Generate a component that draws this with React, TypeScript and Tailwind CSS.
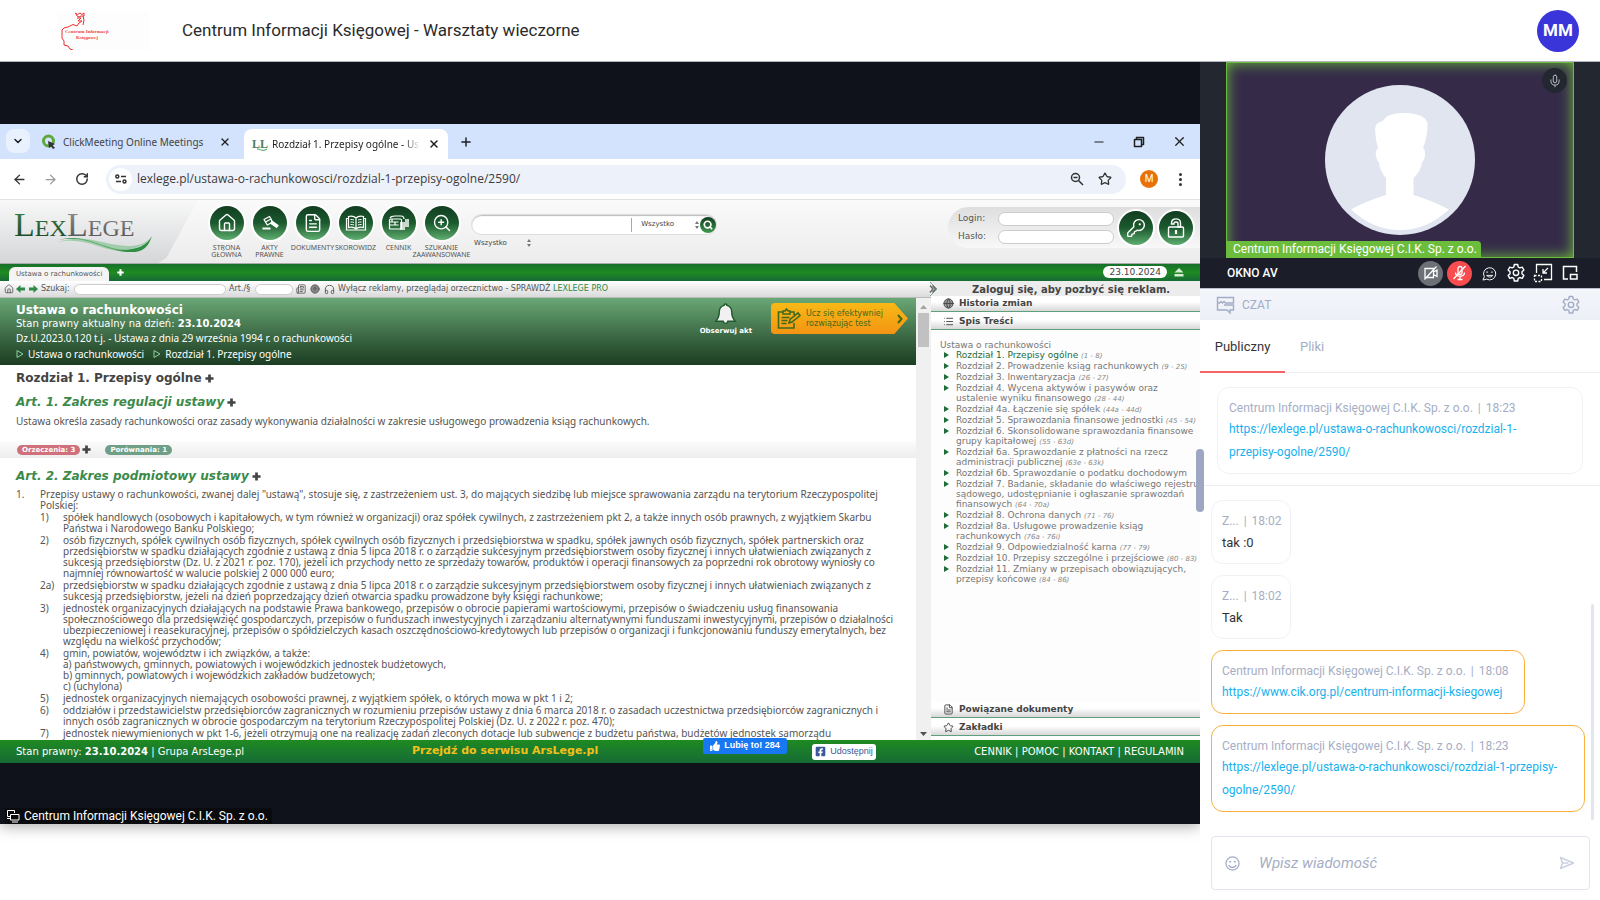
import React, { useState } from 'react';
import {
  ArrowLeft,
  ArrowRight,
  BookOpen,
  ChevronDown,
  CircleArrowUp,
  FileText,
  Globe,
  Headphones,
  House,
  KeyRound,
  List,
  Mic,
  Minus,
  Plus,
  RotateCw,
  Star,
  X,
  ZoomIn,
  Search,
  Newspaper,
} from 'lucide-react';
import { FaFacebookSquare, FaThumbsUp } from 'react-icons/fa';

const chapters = [
  { lines: ['Rozdział 1. Przepisy ogólne'], range: '(1 - 8)', active: true },
  { lines: ['Rozdział 2. Prowadzenie ksiąg rachunkowych'], range: '(9 - 25)' },
  { lines: ['Rozdział 3. Inwentaryzacja'], range: '(26 - 27)' },
  { lines: ['Rozdział 4. Wycena aktywów i pasywów oraz', 'ustalenie wyniku finansowego'], range: '(28 - 44)' },
  { lines: ['Rozdział 4a. Łączenie się spółek'], range: '(44a - 44d)' },
  { lines: ['Rozdział 5. Sprawozdania finansowe jednostki'], range: '(45 - 54)' },
  { lines: ['Rozdział 6. Skonsolidowane sprawozdania finansowe', 'grupy kapitałowej'], range: '(55 - 63d)' },
  { lines: ['Rozdział 6a. Sprawozdanie z płatności na rzecz', 'administracji publicznej'], range: '(63e - 63k)' },
  { lines: ['Rozdział 6b. Sprawozdanie o podatku dochodowym'], range: '' },
  { lines: ['Rozdział 7. Badanie, składanie do właściwego rejestru', 'sądowego, udostępnianie i ogłaszanie sprawozdań', 'finansowych'], range: '(64 - 70a)' },
  { lines: ['Rozdział 8. Ochrona danych'], range: '(71 - 76)' },
  { lines: ['Rozdział 8a. Usługowe prowadzenie ksiąg', 'rachunkowych'], range: '(76a - 76i)' },
  { lines: ['Rozdział 9. Odpowiedzialność karna'], range: '(77 - 79)' },
  { lines: ['Rozdział 10. Przepisy szczególne i przejściowe'], range: '(80 - 83)' },
  { lines: ['Rozdział 11. Zmiany w przepisach obowiązujących,', 'przepisy końcowe'], range: '(84 - 86)' },
];

const points = [
  { no: '1)', lines: ['spółek handlowych (osobowych i kapitałowych, w tym również w organizacji) oraz spółek cywilnych, z zastrzeżeniem pkt 2, a także innych osób prawnych, z wyjątkiem Skarbu', 'Państwa i Narodowego Banku Polskiego;'] },
  { no: '2)', lines: ['osób fizycznych, spółek cywilnych osób fizycznych, spółek cywilnych osób fizycznych i przedsiębiorstwa w spadku, spółek jawnych osób fizycznych, spółek partnerskich oraz', 'przedsiębiorstw w spadku działających zgodnie z ustawą z dnia 5 lipca 2018 r. o zarządzie sukcesyjnym przedsiębiorstwem osoby fizycznej i innych ułatwieniach związanych z', 'sukcesją przedsiębiorstw (Dz. U. z 2021 r. poz. 170), jeżeli ich przychody netto ze sprzedaży towarów, produktów i operacji finansowych za poprzedni rok obrotowy wyniosły co', 'najmniej równowartość w walucie polskiej 2 000 000 euro;'] },
  { no: '2a)', lines: ['przedsiębiorstw w spadku działających zgodnie z ustawą z dnia 5 lipca 2018 r. o zarządzie sukcesyjnym przedsiębiorstwem osoby fizycznej i innych ułatwieniach związanych z', 'sukcesją przedsiębiorstw, jeżeli na dzień poprzedzający dzień otwarcia spadku prowadzone były księgi rachunkowe;'] },
  { no: '3)', lines: ['jednostek organizacyjnych działających na podstawie Prawa bankowego, przepisów o obrocie papierami wartościowymi, przepisów o świadczeniu usług finansowania', 'społecznościowego dla przedsięwzięć gospodarczych, przepisów o funduszach inwestycyjnych i zarządzaniu alternatywnymi funduszami inwestycyjnymi, przepisów o działalności', 'ubezpieczeniowej i reasekuracyjnej, przepisów o spółdzielczych kasach oszczędnościowo-kredytowych lub przepisów o organizacji i funkcjonowaniu funduszy emerytalnych, bez', 'względu na wielkość przychodów;'] },
  { no: '4)', lines: ['gmin, powiatów, województw i ich związków, a także:', 'a) państwowych, gminnych, powiatowych i wojewódzkich jednostek budżetowych,', 'b) gminnych, powiatowych i wojewódzkich zakładów budżetowych;', 'c) (uchylona)'] },
  { no: '5)', lines: ['jednostek organizacyjnych niemających osobowości prawnej, z wyjątkiem spółek, o których mowa w pkt 1 i 2;'] },
  { no: '6)', lines: ['oddziałów i przedstawicielstw przedsiębiorców zagranicznych w rozumieniu przepisów ustawy z dnia 6 marca 2018 r. o zasadach uczestnictwa przedsiębiorców zagranicznych i', 'innych osób zagranicznych w obrocie gospodarczym na terytorium Rzeczypospolitej Polskiej (Dz. U. z 2022 r. poz. 470);'] },
  { no: '7)', lines: ['jednostek niewymienionych w pkt 1-6, jeżeli otrzymują one na realizację zadań zleconych dotacje lub subwencje z budżetu państwa, budżetów jednostek samorządu'] },
];

const messages = [
  { author: 'Z...', time: '18:02', text: 'tak :0' },
  { author: 'Z...', time: '18:02', text: 'Tak' },
  { author: 'Centrum Informacji Księgowej C.I.K. Sp. z o.o.', time: '18:08', link: 'https://www.cik.org.pl/centrum-informacji-ksiegowej' },
  { author: 'Centrum Informacji Księgowej C.I.K. Sp. z o.o.', time: '18:23', link: 'https://lexlege.pl/ustawa-o-rachunkowosci/rozdzial-1-przepisy-ogolne/2590/' },
];

/* ---------- icons ---------- */

const GearIcon = ({ className }: { className?: string }) => (
  <svg viewBox="0 0 20 20" className={className} fill="none" stroke="currentColor" strokeWidth="1.4" strokeLinejoin="round">
    <path d="M8.3 1.5h3.4l.5 2.5 1.6.9 2.4-.8 1.7 2.9-1.9 1.7v2l1.9 1.7-1.7 2.9-2.4-.8-1.6.9-.5 2.6H8.3l-.5-2.6-1.6-.9-2.4.8-1.7-2.9L4 10.700V8.700L2.100 7l1.700-2.900 2.400.8 1.600-.9z" />
    <circle cx="10" cy="9.800" r="2.700" />
  </svg>
);

const GavelIcon = () => (
  <svg viewBox="0 0 20 20" className="size-5" fill="none" stroke="white" strokeWidth="1.3" strokeLinejoin="round">
    <path d="M4 6.500 9.500 3.500 11 6 5.500 9z" />
    <path d="M5.500 9l1.800 3 5-2.800L11 6" />
    <path d="M11.500 7.800 18 12.500l-1.500 1.800-6-4.200" fill="white" />
    <path d="M2.500 15.500h8" strokeWidth="2" />
  </svg>
);

const MoneyIcon = () => (
  <svg viewBox="0 0 22 18" className="h-[18px] w-[22px]" fill="none" stroke="white" strokeWidth="1.200">
    <path d="M2 4c1-2 3-2 5-2h6c2 0 3 1 3 3" />
    <rect x="1.500" y="5" width="12" height="10" rx="1" />
    <path d="M1.500 8h9M1.500 11h9M4 5v3M7 8v3" />
    <path d="M12 9h5M12 11h5M12 13h5M12 15h5M17 6h4M17 8h4M17 10h4M17 12h4" strokeWidth="1.500" />
  </svg>
);

const OpenBookIcon = () => (
  <svg viewBox="0 0 22 18" className="h-[18px] w-[22px]" fill="none" stroke="white" strokeWidth="1.200">
    <path d="M11 4C9 2 6 2 3.500 2.500v11C6 13 9 13 11 15c2-2 5-2 7.500-1.500v-11C16 2 13 2 11 4zM11 4v11" />
    <path d="M3.500 4.500h-2V16h19V4.500h-2" />
    <path d="M5.500 5.500c1.500 0 2.500 0 3.500.5M5.500 8c1.500 0 2.500 0 3.500.5M5.500 10.500c1.500 0 2.500 0 3.500.5M16.500 5.500c-1.500 0-2.500 0-3.500.5M16.500 8c-1.500 0-2.500 0-3.500.5M16.500 10.500c-1.500 0-2.500 0-3.500.5" strokeWidth="1" />
  </svg>
);

const OpenLockIcon = () => (
  <svg viewBox="0 0 20 20" className="size-5" fill="none" stroke="white" strokeWidth="1.400">
    <rect x="2.500" y="9" width="15" height="10" rx="1" />
    <path d="M5.500 6V5c0-5.500 9-5.500 9 0v4h-2.500V5.500c0-2-4-2-4 0V6z" />
    <path d="M10 12v4" strokeWidth="2.200" />
  </svg>
);

const SortArrows = () => (
  <svg viewBox="0 0 6 8" className="h-2 w-[6px]" fill="#777">
    <path d="M3 0l2 3H1zM3 8l2-3H1z" />
  </svg>
);

const PlusMark = ({ className }: { className?: string }) => (
  <svg viewBox="0 0 10 10" className={className || 'size-[9px]'} fill="currentColor">
    <path d="M3.500 0.500h3v3h3v3h-3v3h-3v-3h-3v-3h3z" />
  </svg>
);

const Silhouette = () => (
  <svg viewBox="0 0 150 150" className="size-[150px]">
    <circle cx="75" cy="75" r="75" fill="#e1e5f0" />
    <path
      fill="white"
      d="M61 93V110Q41 116 26 124.500Q48 145 75 145Q102 145 124 124.500Q108 116 88.500 110V93Q96 86 97 77.500Q100 75 100 69Q100 64 98 63Q103 50 102.500 38Q100 29 82 28Q62 27 58 36Q50 37 50 45Q51 57 53 63Q50 66 51 71Q52 76 54 77.500Q55 87 61 93Z"
    />
  </svg>
);

const CompanyLogo = () => (
  <svg viewBox="0 0 92 38" className="h-[38px] w-[92px]" role="img" aria-label="Centrum Informacji Księgowej">
    <rect width="92" height="38" fill="#fdfdfd" />
    <g fill="none" stroke="#f02a2a" strokeWidth="1" strokeLinejoin="round">
      <path d="M18.500 1l2 1.500L23 1l2 1.500L27 1v3h-3l-2 1-2-1z" />
      <path d="M20 6h4l-3 3h4l-3 2M26 4l1 4-1 5" />
      <path d="M22 11l-2 3-4-1.500-5 2.500-4 1-2 2v8l2 3v4l4 1 2 3 3 1 2 2 3 1" />
    </g>
    <text x="8" y="21" fontSize="5" fontWeight="700" fontFamily="'Liberation Serif', serif" fill="#f04444">Centrum Informacji</text>
    <text x="19" y="27" fontSize="5" fontWeight="700" fontFamily="'Liberation Serif', serif" fill="#f04444">Księgowej</text>
  </svg>
);

/* ---------- shared browser window ---------- */

const TabStrip = () => (
  <div className="flex h-[35px] items-end bg-[#d3e3fd] pl-[6px] font-['Noto_Sans',sans-serif] text-[10px] text-[#1f1f1f]">
    <button aria-label="Szukaj kart" className="mb-[6px] flex size-6 items-center justify-center rounded-lg bg-[#e9f1fe]">
      <ChevronDown className="size-3" strokeWidth={3} />
    </button>
    <div className="flex h-[34px] w-[214px] items-center pl-[11px]">
      <svg viewBox="0 0 16 16" className="size-4">
        <circle cx="7.500" cy="7" r="5" fill="none" stroke="#5fa83b" strokeWidth="3" />
        <path d="M7 7l7 3-2.500 1.300L14 14l-2 1-2-2.500L8 14z" fill="#333" />
      </svg>
      <span className="ml-[6px] flex-1 whitespace-nowrap text-[#444]">ClickMeeting Online Meetings</span>
      <button aria-label="Zamknij kartę" className="mr-[13px]"><X className="size-3" strokeWidth={2.500} /></button>
    </div>
    <div className="flex h-[30px] w-[204px] items-center rounded-t-lg bg-white pl-2">
      <span className="relative font-['Liberation_Serif',serif] text-[12px] font-bold leading-none text-[#4b7f60]">
        LL
        <svg viewBox="0 0 14 4" className="absolute -bottom-[2px] left-[2px] h-1 w-[14px]" fill="none" stroke="#2b9a5b"><path d="M3 1c4 0 5 3 10 0" /></svg>
      </span>
      <span className="ml-1 w-[148px] overflow-hidden whitespace-nowrap [mask-image:linear-gradient(to_right,black_90%,transparent)]">Rozdział 1. Przepisy ogólne - Us</span>
      <button aria-label="Zamknij kartę" className="ml-2"><X className="size-3" strokeWidth={3} /></button>
    </div>
    <button aria-label="Nowa karta" className="mb-[10px] ml-[11px]"><Plus className="size-[14px]" strokeWidth={2.500} /></button>
    <div className="mb-[10px] ml-auto flex items-center gap-[27px] pr-[13px]">
      <button aria-label="Minimalizuj"><Minus className="size-[14px]" /></button>
      <button aria-label="Przywróć">
        <svg viewBox="0 0 12 12" className="size-3" fill="none" stroke="#1f1f1f" strokeWidth="1.500" strokeLinejoin="round"><path d="M1.500 3.500h7v7h-7zM3.500 3.500v-2h7v7h-2" /></svg>
      </button>
      <button aria-label="Zamknij"><X className="size-[15px]" /></button>
    </div>
  </div>
);

const AddressBar = () => (
  <div className="flex h-[41px] items-center border-b border-[#e2e2e2] bg-white pl-3 pr-[14px] text-[#333]">
    <button aria-label="Wstecz"><ArrowLeft className="size-[15px]" strokeWidth={2.200} /></button>
    <button aria-label="Dalej" className="ml-4 text-[#999]"><ArrowRight className="size-[15px]" /></button>
    <button aria-label="Odśwież" className="ml-[17px]"><RotateCw className="size-[14px]" strokeWidth={2.500} /></button>
    <div className="ml-[17px] flex h-[29px] flex-1 items-center rounded-full bg-[#ecf1fa] pl-[3px] pr-[14px]">
      <span className="flex size-[23px] items-center justify-center rounded-full bg-white">
        <svg viewBox="0 0 12 10" className="h-[10px] w-3" fill="none" stroke="#333" strokeWidth="1.500">
          <circle cx="2.300" cy="2.500" r="1.500" /><path d="M6 2.500h5M1 7.500h5" /><circle cx="9.500" cy="7.500" r="1.500" />
        </svg>
      </span>
      <input
        aria-label="Adres"
        defaultValue="lexlege.pl/ustawa-o-rachunkowosci/rozdzial-1-przepisy-ogolne/2590/"
        className="ml-[5px] flex-1 bg-transparent font-['Open_Sans',sans-serif] text-[12px] text-[#3c3c3c] outline-none"
      />
      <button aria-label="Powiększenie">
        <svg viewBox="0 0 14 14" className="size-[14px]" fill="none" stroke="#333" strokeWidth="1.500"><circle cx="5.500" cy="5.500" r="4" /><path d="M8.500 8.500l4.500 4.500M3.500 5.500h4" /></svg>
      </button>
      <button aria-label="Dodaj do zakładek" className="ml-[14px]"><Star className="size-[14px]" strokeWidth={2.200} strokeLinejoin="miter" /></button>
    </div>
    <button className="ml-[14px] size-[18px] rounded-full bg-[#e8710a] font-['Roboto',sans-serif] text-[10px] leading-none text-white">M</button>
    <button aria-label="Menu" className="ml-[17px] flex w-[11px] flex-col items-center gap-[2px]">
      <i className="size-[3px] rounded-full bg-[#333]" />
      <i className="size-[3px] rounded-full bg-[#333]" />
      <i className="size-[3px] rounded-full bg-[#333]" />
    </button>
  </div>
);

const NavCircle = ({ children }: { children: React.ReactNode }) => (
  <span className="flex size-[34px] items-center justify-center rounded-full bg-linear-to-b from-[#123d20] via-[#1b5a2e] to-[#5fae70] text-white ring-2 ring-white">
    {children}
  </span>
);

const navItems = [
  { label: ['STRONA', 'GŁÓWNA'], icon: <House className="size-5" strokeWidth={1.700} /> },
  { label: ['AKTY', 'PRAWNE'], icon: <GavelIcon /> },
  { label: ['DOKUMENTY'], icon: <FileText className="size-5" strokeWidth={1.700} /> },
  { label: ['SKOROWIDZ'], icon: <OpenBookIcon /> },
  { label: ['CENNIK'], icon: <MoneyIcon /> },
  { label: ['SZUKANIE', 'ZAAWANSOWANE'], icon: <ZoomIn className="size-5" strokeWidth={1.700} /> },
];

const LexHeader = () => (
  <div className="flex h-16 border-b border-[#aaa] bg-linear-to-b from-[#fafafa] to-[#ececec]">
    <div className="w-[198px] bg-linear-to-b from-[#f8f8f8] to-[#d4d6d8] [clip-path:polygon(0_0,100%_0,84%_92%,80%_100%,0_100%)]">
      <svg viewBox="0 0 198 63" className="h-[63px] w-[198px]" role="img" aria-label="LexLege">
        <defs>
          <linearGradient id="lexg" x1="0" y1="0" x2="0" y2="1"><stop offset="0" stopColor="#3f8a50" /><stop offset="1" stopColor="#14401f" /></linearGradient>
          <linearGradient id="lexs" x1="0" y1="0" x2="0" y2="1"><stop offset="0" stopColor="#999" /><stop offset="1" stopColor="#4c4c4c" /></linearGradient>
        </defs>
        <g fontFamily="'Liberation Serif', serif">
          <text x="14" y="36" fill="url(#lexg)" fontSize="34">L<tspan fontSize="24">EX</tspan></text>
          <text x="67" y="36" fill="url(#lexs)" fontSize="34">L<tspan fontSize="24">EGE</tspan></text>
        </g>
        <path d="M58 40C88 31 108 54 132 49C144 47 148 42 152 36C148 48 142 53 128 52C104 51 88 34 58 40Z" fill="#2f8f45" />
        <path d="M58 42C88 36 106 54 124 50C140 48 146 44 151 38C144 44 138 46 128 46C106 46 86 33 58 42Z" fill="#7cc08a" opacity=".6" />
      </svg>
    </div>
    <nav className="ml-[7px] flex pt-[6px]">
      {navItems.map((item) => (
        <a key={item.label[0]} href="#" className="flex w-[43px] flex-col items-center whitespace-nowrap text-center font-['Noto_Sans',sans-serif] text-[7px] leading-[7px] text-[#555]">
          <NavCircle>{item.icon}</NavCircle>
          <span className="mt-1 flex flex-col items-center">
            {item.label.map((l) => <span key={l}>{l}</span>)}
          </span>
        </a>
      ))}
    </nav>
    <div className="ml-2 pt-[14px] font-['DejaVu_Sans',sans-serif] text-[7px] text-[#444]">
      <div className="flex h-[21px] w-[246px] items-center rounded-full border border-[#ddd] bg-white shadow-[inset_0_1px_1px_#bbb]">
        <input aria-label="Szukaj w serwisie" className="ml-3 h-4 w-[149px] outline-none" />
        <div className="flex h-[14px] items-center border-l border-[#aaa] pl-[9px]">
          <select aria-label="Zakres" className="w-[53px] appearance-none bg-transparent outline-none"><option>Wszystko</option></select>
          <SortArrows />
        </div>
        <button aria-label="Szukaj" className="flex size-4 items-center justify-center rounded-full bg-linear-to-b from-[#123d20] to-[#3f9a50] text-white">
          <Search className="size-[10px]" strokeWidth={4} />
        </button>
      </div>
      <div className="mt-[3px] flex items-center pl-[3px]">
        <select aria-label="Kategoria" className="w-[52px] appearance-none bg-transparent outline-none"><option>Wszystko</option></select>
        <SortArrows />
      </div>
    </div>
    <form className="ml-auto mt-[7px] flex h-[41px] w-[252px] items-center rounded-l-full bg-linear-to-b from-[#dedede] to-[#f8f8f8] pl-[10px] font-['DejaVu_Sans',sans-serif] text-[9px] text-[#555]">
      <div className="grid grid-cols-[40px_116px] items-center gap-y-1">
        <label htmlFor="login">Login:</label>
        <input id="login" className="h-[14px] rounded-full border border-[#ccc] bg-white px-2" />
        <label htmlFor="haslo">Hasło:</label>
        <input id="haslo" type="password" className="h-[14px] rounded-full border border-[#ccc] bg-white px-2" />
      </div>
      <button type="button" aria-label="Zaloguj" className="ml-[5px]"><NavCircle><KeyRound className="size-5" strokeWidth={1.700} /></NavCircle></button>
      <button type="button" aria-label="Rejestracja" className="ml-[6px]"><NavCircle><OpenLockIcon /></NavCircle></button>
    </form>
  </div>
);

const GreenTabs = () => (
  <div className="flex h-[17px] items-end bg-linear-to-b from-[#17702a] via-[#1f8a20] to-[#166b34] pl-[9px] font-['DejaVu_Sans',sans-serif]">
    <div className="flex h-[14px] items-center rounded-t-md bg-[#f4f4f4] pl-[7px] pr-[7px] text-[7px] text-[#555]">Ustawa o rachunkowości</div>
    <button aria-label="Dodaj" className="mb-[5px] ml-2 text-white"><PlusMark className="size-[7px]" /></button>
    <div className="mb-[3px] ml-auto flex items-center gap-[7px] pr-4">
      <span className="h-3 rounded-full bg-white px-[6px] text-[9px] leading-3 text-[#444]">23.10.2024</span>
      <svg viewBox="0 0 10 9" className="h-[9px] w-[10px]" fill="#d5ecd5"><path d="M5 0l4.500 4.500h-9zM.5 6h9v2.500h-9z" /></svg>
    </div>
  </div>
);

const DocToolbar = () => (
  <div className="flex h-[17px] items-center border-b border-[#bbb] bg-linear-to-b from-white to-[#dadada] pl-1 font-['DejaVu_Sans',sans-serif] text-[8px] text-[#555]">
    <House className="size-[10px]" />
    <svg viewBox="0 0 22 8" className="ml-[2px] h-2 w-[22px]" fill="#2f8a4a">
      <path d="M0 4l4.500-4v2.500H9v3H4.500V8zM22 4l-4.500-4v2.500H13v3h4.500V8z" />
    </svg>
    <label htmlFor="find" className="ml-[3px] w-[33px]">Szukaj:</label>
    <input id="find" className="h-[11px] w-[152px] rounded-full border border-[#ccc] bg-white px-2 text-[8px]" />
    <label htmlFor="art" className="ml-[3px] w-[26px]">Art./§</label>
    <input id="art" className="h-[11px] w-[38px] rounded-full border border-[#ccc] bg-white px-1 text-[8px]" />
    <Newspaper className="ml-[3px] size-[10px]" />
    <CircleArrowUp className="ml-1 size-[10px]" fill="#888" />
    <Headphones className="ml-1 size-[11px]" />
    <span className="ml-[3px] whitespace-nowrap">
      Wyłącz reklamy, przeglądaj orzecznictwo - SPRAWDŹ <a href="#" className="text-[#2f8a4a]">LEXLEGE PRO</a>
    </span>
    <svg viewBox="0 0 10 16" className="z-10 -mr-2 ml-auto h-4 w-[10px]" fill="#eee" stroke="#7aa58c">
      <path d="M1 1l7 7-7 7" />
      <path d="M1 4.500L4 8l-3 3.500M3.500 4.500l3 3.500-3 3.500" stroke="#666" fill="none" strokeWidth="1.400" />
    </svg>
  </div>
);

const ActHeader = () => (
  <div className="flex h-[67px] justify-between bg-linear-to-b from-[#6aa876] to-[#1c3d22] pl-4 text-[10px] text-white">
    <div className="pt-1">
      <h1 className="text-[12px] font-bold leading-4">Ustawa o rachunkowości</h1>
      <p className="leading-3">Stan prawny aktualny na dzień: <b>23.10.2024</b></p>
      <p className="mt-[2px] font-['Noto_Sans',sans-serif] leading-[13px]">Dz.U.2023.0.120 t.j. - Ustawa z dnia 29 września 1994 r. o rachunkowości</p>
      <p className="mt-[3px] flex items-center font-['Noto_Sans',sans-serif] leading-3">
        <svg viewBox="0 0 8 8" className="mr-1 size-2" fill="none" stroke="#8fd0a0"><path d="M1 .5l6 3.500-6 3.500z" /></svg>
        <a href="#">Ustawa o rachunkowości</a>
        <svg viewBox="0 0 8 8" className="ml-[9px] mr-1 size-2" fill="none" stroke="#8fd0a0"><path d="M1 .5l6 3.500-6 3.500z" /></svg>
        <a href="#">Rozdział 1. Przepisy ogólne</a>
      </p>
    </div>
    <div className="flex items-start pr-[8px] pt-[5px]">
      <button className="mr-[19px] flex flex-col items-center text-[7px] font-bold leading-[10px]">
        <svg viewBox="0 0 24 24" className="size-[23px]" fill="#f1f1f1" stroke="#1f5a2e" strokeWidth="1.500">
          <path d="M12 1c-1 0-1.500.6-1.500 1.500C7 3.500 5.500 6 5.500 9.500c0 4-.5 6-3.500 9.500h7.500c.5 3 4.500 3 5 0H22c-3-3.500-3.500-5.500-3.500-9.500 0-3.500-1.500-6-5-7C13.500 1.600 13 1 12 1z" />
        </svg>
        Obserwuj akt
      </button>
      <button className="flex h-[31px] w-[137px] items-center rounded-l bg-linear-to-b from-[#f7b916] to-[#f39412] pl-[6px] text-left text-[8px] leading-[10px] text-[#3f6a1c] [clip-path:polygon(0_0,90%_0,100%_50%,90%_100%,0_100%)]">
        <svg viewBox="0 0 24 22" className="h-[22px] w-6" fill="none" stroke="#3f6a1c" strokeWidth="1.600">
          <path d="M17 15v5H1.500V4H6M13 4h4v3M6 6V3h2l1.500-2L11 3h2v3zM4.500 9.500h8M4.500 12.500h6M4.500 15.500h5M12 15l1-3.500L21 5l2 2.500-8 6.500z" />
        </svg>
        <span className="ml-[5px] w-[91px] whitespace-nowrap">Ucz się efektywniej<br />rozwiązując test</span>
        <svg viewBox="0 0 6 10" className="h-[10px] w-[6px]" fill="none" stroke="#3f6a1c" strokeWidth="2"><path d="M1 1l3.500 4L1 9" /></svg>
      </button>
    </div>
  </div>
);

const ActBody = () => (
  <div className="flex flex-col pb-px font-['Noto_Sans',sans-serif] text-[10px] text-[#555]">
    <h2 className="mt-[5px] flex items-center gap-[3px] pl-4 font-['DejaVu_Sans',sans-serif] text-[12px] font-bold leading-4 text-[#444]">Rozdział 1. Przepisy ogólne <PlusMark /></h2>
    <h3 className="mt-2 flex items-center gap-[3px] pl-4 font-['DejaVu_Sans',sans-serif] text-[12px] font-bold italic leading-4 text-[#3a8a4a]">Art. 1. Zakres regulacji ustawy <PlusMark className="size-[9px] text-[#444]" /></h3>
    <p className="mt-[5px] whitespace-nowrap pl-4 leading-3">Ustawa określa zasady rachunkowości oraz zasady wykonywania działalności w zakresie usługowego prowadzenia ksiąg rachunkowych.</p>
    <div className="mt-[14px] flex h-[17px] items-center bg-linear-to-b from-[#fcfcfc] to-[#ededed] pl-[17px] font-['DejaVu_Sans',sans-serif] text-[7px] font-bold leading-[10px] text-white">
      <a href="#" className="rounded-full bg-[#d0707a] px-[5px]">Orzeczenia: 3</a>
      <PlusMark className="ml-[2px] size-[9px] text-[#444]" />
      <a href="#" className="ml-[14px] rounded-full bg-[#6f9f86] px-[5px]">Porównania: 1</a>
    </div>
    <h3 className="mt-[10px] flex items-center gap-[3px] pl-4 font-['DejaVu_Sans',sans-serif] text-[12px] font-bold italic leading-4 text-[#3a8a4a]">Art. 2. Zakres podmiotowy ustawy <PlusMark className="size-[9px] text-[#444]" /></h3>
    <div className="mt-[5px] flex flex-col gap-px whitespace-nowrap pl-4 leading-[11px]">
      <div className="flex">
        <span className="w-6">1.</span>
        <p>Przepisy ustawy o rachunkowości, zwanej dalej "ustawą", stosuje się, z zastrzeżeniem ust. 3, do mających siedzibę lub miejsce sprawowania zarządu na terytorium Rzeczypospolitej<br />Polskiej:</p>
      </div>
      {points.map((p) => (
        <div key={p.no} className="flex pl-6">
          <span className="w-[23px]">{p.no}</span>
          <div>{p.lines.map((l) => <p key={l}>{l}</p>)}</div>
        </div>
      ))}
    </div>
  </div>
);

const SideBar = ({ icon, label }: { icon: React.ReactNode; label: string }) => (
  <button className="flex h-[16px] w-full items-center border-b border-[#5f9f7c] bg-linear-to-b from-white from-40% to-[#d8d8d8] pl-3 text-[9px] font-bold text-[#444]">
    <span className="flex w-4">{icon}</span>
    {label}
  </button>
);

const Contents = () => (
  <aside className="flex w-[269px] shrink-0 flex-col overflow-hidden bg-[#fdfdfd]">
    <p className="h-[15px] bg-[#ececec] pl-[41px] text-[10px] font-bold leading-[18px] text-[#444]">Zaloguj się, aby pozbyć się reklam.</p>
    <SideBar icon={<Globe className="size-[11px]" fill="#999" />} label="Historia zmian" />
    <div className="h-[2px]" />
    <SideBar icon={<List className="size-[11px]" />} label="Spis Treści" />
    <div className="flex-1 whitespace-nowrap pl-[9px] pt-[10px] text-[9px] leading-[10px] text-[#777]">
      <p>Ustawa o rachunkowości</p>
      <ul className="flex flex-col gap-px">
        {chapters.map((c) => (
          <li key={c.lines[0]} className="flex">
            <svg viewBox="0 0 5 6" className="ml-1 mr-[7px] mt-[2px] h-[6px] w-[5px]" fill="#1f6b3a"><path d="M0 0l5 3-5 3z" /></svg>
            <a href="#" className={c.active ? 'text-[#1f6b3a]' : undefined}>
              {c.lines.map((l, i) => (
                <span key={l} className="block h-[10px]">
                  {l} {i === c.lines.length - 1 && <i className="text-[7px] leading-none text-[#888]">{c.range}</i>}
                </span>
              ))}
            </a>
          </li>
        ))}
      </ul>
    </div>
    <SideBar icon={<FileText className="size-[11px]" />} label="Powiązane dokumenty" />
    <div className="h-[2px]" />
    <SideBar icon={<Star className="size-[11px]" />} label="Zakładki" />
    <div className="h-1" />
  </aside>
);

const SharedBrowser = () => (
  <div className="bg-white">
    <TabStrip />
    <AddressBar />
    <LexHeader />
    <GreenTabs />
    <div className="flex font-['DejaVu_Sans',sans-serif]">
      <div className="flex min-w-0 flex-1 flex-col">
        <DocToolbar />
        <div className="flex">
          <div className="min-w-0 flex-1 overflow-hidden">
            <ActHeader />
            <ActBody />
          </div>
          <div className="flex w-[15px] flex-col items-center bg-[#f0f0f0] py-1">
            <svg viewBox="0 0 7 4" className="mt-[3px] h-1 w-[7px]" fill="#a3a3a3"><path d="M3.500 0L7 4H0z" /></svg>
            <div className="mt-[4px] h-[34px] w-[11px] bg-[#c1c1c1]" />
            <svg viewBox="0 0 7 4" className="mt-auto h-1 w-[7px]" fill="#505050"><path d="M0 0h7L3.500 4z" /></svg>
          </div>
        </div>
      </div>
      <Contents />
    </div>
    <footer className="flex h-[23px] items-center whitespace-nowrap bg-linear-to-b from-[#1f8a20] to-[#166b34] pl-4 pr-4 font-['DejaVu_Sans',sans-serif] text-[10px] text-white">
      <p className="w-[396px]">Stan prawny: <b>23.10.2024</b> | Grupa ArsLege.pl</p>
      <a href="#" className="w-[291px] text-[11px] font-bold text-[#f3c01b]">Przejdź do serwisu ArsLege.pl</a>
      <button className="mb-3 flex h-4 w-[84px] items-center justify-center gap-1 rounded-[2px] bg-[#1877f2] font-['Liberation_Sans',sans-serif] text-[9px] font-bold">
        <FaThumbsUp className="size-[10px]" /> Lubię to! 284
      </button>
      <button className="ml-[25px] flex h-4 w-[64px] items-center justify-center gap-1 rounded-[3px] bg-white font-['Liberation_Sans',sans-serif] text-[9px] text-[#3b5998]">
        <FaFacebookSquare className="size-[11px]" /> Udostępnij
      </button>
      <p className="ml-auto"><a href="#">CENNIK</a> | <a href="#">POMOC</a> | <a href="#">KONTAKT</a> | <a href="#">REGULAMIN</a></p>
    </footer>
  </div>
);

/* ---------- right column ---------- */

const AvPanel = () => (
  <section>
    <div className="bg-[#23272f] px-[26px]">
      <div className="relative flex h-[196px] items-center justify-center border border-[#6cbd3c] bg-[#352b49] shadow-[inset_0_0_14px_#6cbd3c]">
        <Silhouette />
        <button aria-label="Mikrofon" className="absolute right-[6px] top-[5px] flex size-[25px] items-center justify-center rounded-full bg-[#23272f] text-[#c8ccd6]">
          <Mic className="size-[14px]" strokeWidth={1.500} />
        </button>
        <p className="absolute bottom-0 left-0 h-4 rounded-tr-sm bg-[#6cbd3c] pl-[6px] pr-1 text-[12px] leading-4 text-white">Centrum Informacji Księgowej C.I.K. Sp. z o.o.</p>
      </div>
    </div>
    <div className="flex h-[30px] items-center bg-[#1b1e28] pl-[27px] pr-[22px] text-white">
      <h2 className="flex-1 text-[12px] font-medium">OKNO AV</h2>
      <button aria-label="Kamera wyłączona" className="flex size-[25px] items-center justify-center rounded-full bg-[#6d7077]">
        <svg viewBox="0 0 16 16" className="size-4" fill="none" stroke="white" strokeWidth="1.300"><path d="M2 3.500h8.500v9H2zM10.500 7l3.500-2v6.500l-3.500-2M1.500 14.500l12-13" /></svg>
      </button>
      <button aria-label="Mikrofon wyciszony" className="ml-1 flex size-[25px] items-center justify-center rounded-full bg-[#f84c4f]">
        <svg viewBox="0 0 16 16" className="size-4" fill="none" stroke="white" strokeWidth="1.300"><rect x="6" y="1.500" width="4" height="8" rx="2" /><path d="M3.500 7.500c0 5 9 5 9 0M8 11.500V14M5.500 14.500h5M1.500 14l12-13" /></svg>
      </button>
      <button aria-label="Reakcje" className="ml-[10px]">
        <svg viewBox="0 0 16 16" className="size-[15px]" fill="none" stroke="white"><path d="M2.500 11.500A6.500 6.500 0 1 1 5 14L1 15z" /><path d="M5 10c1.500 2.300 5 2.300 6.500 0zM4.500 6.500h2M9.500 6.500h2" /></svg>
      </button>
      <button aria-label="Ustawienia" className="ml-[9px]"><GearIcon className="size-5" /></button>
      <button aria-label="Zmniejsz" className="ml-[7px]">
        <svg viewBox="0 0 20 20" className="size-5" fill="none" stroke="white" strokeWidth="1.300"><path d="M3.500 10V1.500h15v15H11" /><path d="M15 5l-5 5M10 6v4h4" /><path d="M1.500 12.500h7v6h-7z" strokeDasharray="2 1.500" /></svg>
      </button>
      <button aria-label="Obraz w obrazie" className="ml-[9px]">
        <svg viewBox="0 0 16 16" className="size-4" fill="none" stroke="white" strokeWidth="1.500"><path d="M6 14H1.500V1.500h13V7" /><path d="M8.500 9.500h6.500V14H8.500z" /></svg>
      </button>
    </div>
  </section>
);

const MessageMeta = ({ author, time }: { author: string; time: string }) => (
  <p className="whitespace-nowrap text-[12px] leading-5 text-[#a6aec5]">{author} <span className="px-[2px]">|</span> {time}</p>
);

const Chat = () => {
  const [tab, setTab] = useState('public');

  return (
    <section className="flex flex-1 flex-col">
      <div className="flex h-8 items-center border-t border-[#b9bfd0] bg-linear-to-b from-[#f4f6fb] to-[#eceff6] pl-4 pr-[19px] text-[#a3acc6]">
        <svg viewBox="0 0 20 18" className="h-[18px] w-5" fill="none" stroke="currentColor" strokeWidth="1.400"><path d="M1.500 1.500h16v5.500h-8l-1.500-1.500L6.500 7 5 5.500 3.500 7h-2zM1.500 7v7h9.500l3 3v-3h3.500V9H8" /></svg>
        <h2 className="ml-[6px] flex-1 text-[12px]">CZAT</h2>
        <button aria-label="Ustawienia czatu"><GearIcon className="size-5" /></button>
      </div>
      <div className="flex h-[53px] border-b border-[#eceef3] text-[13px]">
        <button onClick={() => setTab('public')} className={tab === 'public' ? 'h-[53px] w-[85px] border-b-2 border-[#f66467] pt-[3px] text-[#333]' : 'h-[53px] w-[85px] pt-px text-[#a6aec5]'}>Publiczny</button>
        <button onClick={() => setTab('files')} className={tab === 'files' ? 'ml-[7px] h-[53px] border-b-2 border-[#f66467] px-2 pt-[3px] text-[#333]' : 'ml-[7px] h-[53px] px-2 pt-px text-[#a6aec5]'}>Pliki</button>
      </div>
      <div className="border-b border-[#eceef3] pb-[11px] pl-[17px] pr-[17px] pt-[14px]">
        <div className="rounded-xl border border-[#f0f2f6] pb-[9px] pl-[11px] pr-7 pt-[10px]">
          <MessageMeta author="Centrum Informacji Księgowej C.I.K. Sp. z o.o." time="18:23" />
          <a href="#" className="block text-[12px] leading-[23px] text-[#16b1ee]">https://lexlege.pl/ustawa-o-rachunkowosci/rozdzial-1-przepisy-ogolne/2590/</a>
        </div>
      </div>
      <div className="flex flex-1 pr-[6px]">
        <ul className="flex flex-1 flex-col items-start gap-[11px] pl-[11px] pr-[6px] pt-[14px]">
          {messages.map((m, i) => (
            <li key={i} className={m.link ? 'rounded-xl border border-[#fbb13c] pb-[9px] pl-[10px] pr-[15px] pt-[10px]' : 'rounded-xl border border-[#f0f2f6] pb-[9px] pl-[10px] pr-[9px] pt-[10px]'}>
              <MessageMeta author={m.author} time={m.time} />
              {m.link
                ? <a href="#" className="block text-[12px] leading-[23px] text-[#16b1ee]">{m.link}</a>
                : <p className="text-[13px] leading-[23px] text-[#333]">{m.text}</p>}
            </li>
          ))}
        </ul>
        <div className="mb-4 h-[216px] w-[3px] self-end rounded-full bg-[#e1e5ee]" />
      </div>
      <form className="mb-[10px] ml-[11px] mr-[10px] flex h-[54px] items-center rounded border border-[#e1e5ee] pl-[13px] pr-[14px]">
        <button type="button" aria-label="Emotikony" className="text-[#a3acc6]">
          <svg viewBox="0 0 16 16" className="size-[15px]" fill="none" stroke="currentColor" strokeWidth="1.300"><circle cx="8" cy="8" r="7" /><path d="M4 9.500c1.500 3.500 6.500 3.500 8 0" /><path d="M4.500 6h2M9.500 6h2" strokeWidth="1.600" /></svg>
        </button>
        <input aria-label="Wiadomość" placeholder="Wpisz wiadomość" className="ml-[19px] min-w-0 flex-1 text-[15px] italic outline-none placeholder:text-[#a6aec5]" />
        <button type="button" aria-label="Wyślij" className="text-[#c9cfdf]">
          <svg viewBox="0 0 16 14" className="h-[14px] w-4" fill="none" stroke="currentColor" strokeWidth="1.500" strokeLinejoin="round"><path d="M1.500 1.500L14.500 7l-13 5.500L3.500 7zM3.500 7h6" /></svg>
        </button>
      </form>
    </section>
  );
};

export default function App() {
  return (
    <div className="flex min-h-screen flex-col bg-white font-['Roboto',sans-serif] text-[#333]">
      <header className="z-10 flex h-[62px] items-center border-b border-[#b4b4be] bg-white pl-[57px] pr-[21px]">
        <CompanyLogo />
        <h1 className="ml-[33px] flex-1 text-[17px] text-[#2b2b2b]">Centrum Informacji Księgowej - Warsztaty wieczorne</h1>
        <button className="size-[42px] rounded-full bg-[#3a35d8] text-[17px] font-bold text-white">MM</button>
      </header>
      <main className="flex flex-1">
        <section className="relative min-w-0 flex-1">
          <div className="bg-[#0f121b] pt-[62px] shadow-[0_2px_14px_rgba(0,0,0,0.35)]">
            <SharedBrowser />
            <div className="flex h-[61px] items-end pl-[5px]">
              <p className="flex h-4 items-center bg-[#0a0b0e] pl-px pr-1 text-[12px] leading-4 text-white">
                <svg viewBox="0 0 14 14" className="mr-1 size-[14px]" fill="none" stroke="currentColor"><path d="M4 7.500H1.500v-6h7V4M1 9.500h3M4.500 5.500h8.500v5.500H4.500zM6 13h6" /></svg>
                Centrum Informacji Księgowej C.I.K. Sp. z o.o.
              </p>
            </div>
          </div>
          <div className="absolute -right-1 top-[387px] z-10 h-[63px] w-2 rounded bg-[#9ea7c2]" />
        </section>
        <aside className="z-[5] flex w-[400px] shrink-0 flex-col bg-white">
          <AvPanel />
          <Chat />
        </aside>
      </main>
    </div>
  );
}
